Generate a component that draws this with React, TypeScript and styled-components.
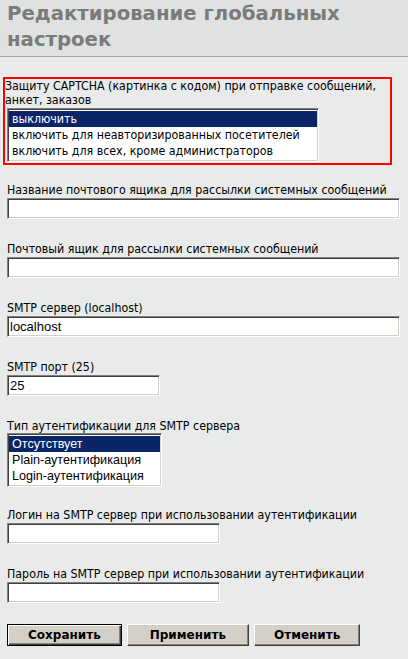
import styled, { createGlobalStyle } from "styled-components";

const GlobalStyle = createGlobalStyle`
  html, body {
    margin: 0;
    padding: 0;
    background: #e8ebe9;
  }
  body {
    font-family: "DejaVu Sans Condensed", "DejaVu Sans", Tahoma, sans-serif;
    font-size: 12.3px;
    color: #000;
  }
`;

const Page = styled.div`
  width: 408px;
  min-height: 659px;
  background: #e8ebe9;
`;

const Header = styled.div`
  background: #dfe2e0;
  border-bottom: 1px solid #a6a8a7;
  padding: 1px 7px 3px;
  height: 52px;
`;

const Title = styled.h1`
  margin: 0;
  font-family: "DejaVu Sans", Verdana, sans-serif;
  font-size: 19.7px;
  font-weight: bold;
  line-height: 26px;
  color: #7a7c7b;
`;

const Form = styled.form`
  display: flex;
  flex-direction: column;
  align-items: flex-start;
  padding: 20px 0 0 3px;
`;

const Highlight = styled.div`
  box-sizing: border-box;
  width: 389px;
  border: 2px solid #ff0000;
  padding: 0 0 1px 0;
  margin-bottom: 18px;
`;

const Field = styled.div<{ $gap?: number }>`
  display: flex;
  flex-direction: column;
  align-items: flex-start;
  padding-left: 4px;
  margin-bottom: ${(p) => p.$gap ?? 23}px;
`;

const Label = styled.label<{ $tight?: boolean }>`
  display: block;
  line-height: ${(p) => (p.$tight ? "14px" : "15px")};
  white-space: nowrap;
`;

const TextInput = styled.input<{ $width: number }>`
  box-sizing: border-box;
  width: ${(p) => p.$width}px;
  height: 21px;
  margin: 0;
  padding: 1px 2px;
  font-family: "Liberation Sans", Arial, sans-serif;
  font-size: 13px;
  color: #000;
  background: #fff;
  border-style: solid;
  border-width: 1px;
  border-color: #808080 #ffffff #ffffff #808080;
  box-shadow: inset 1px 1px 0 #404040, inset -1px -1px 0 #d4d0c8;
  outline: none;
`;

const ListBox = styled.div<{ $width: number; $shift?: number }>`
  box-sizing: border-box;
  width: ${(p) => p.$width}px;
  margin-left: ${(p) => p.$shift ?? 0}px;
  margin-top: ${(p) => (p.$shift ? 1 : -1)}px;
  background: #fff;
  border-style: solid;
  border-width: 1px;
  border-color: #808080 #ffffff #ffffff #808080;
  box-shadow: inset 1px 1px 0 #404040, inset -1px -1px 0 #d4d0c8;
  padding: 2px 1px;
`;

const Option = styled.div<{ $selected?: boolean; $arial?: boolean }>`
  height: 16px;
  line-height: 16px;
  padding-left: 3px;
  white-space: nowrap;
  font-family: ${(p) =>
    p.$arial
      ? `"Liberation Sans", Arial, sans-serif`
      : `"DejaVu Sans Condensed", "DejaVu Sans", Tahoma, sans-serif`};
  font-size: ${(p) => (p.$arial ? "12.6px" : "12.3px")};
  background: ${(p) => (p.$selected ? "#0a246a" : "transparent")};
  color: ${(p) => (p.$selected ? "#fff" : "#000")};
`;

const Buttons = styled.div`
  display: flex;
  gap: 5px;
  padding-left: 4px;
  margin-top: -2px;
`;

const Button = styled.button<{ $default?: boolean; $pad?: number }>`
  box-sizing: border-box;
  height: 22px;
  padding: 0 ${(p) => p.$pad ?? 19}px;
  margin: 0;
  font-family: "DejaVu Sans", Verdana, sans-serif;
  font-size: 12px;
  font-weight: bold;
  color: #000;
  background: #d4d0c8;
  border-style: solid;
  border-width: 1px;
  border-color: ${(p) =>
    p.$default ? "#000" : "#ffffff #404040 #404040 #ffffff"};
  box-shadow: ${(p) =>
    p.$default
      ? "inset 1px 1px 0 #fff, inset -1px -1px 0 #404040, inset -2px -2px 0 #808080"
      : "inset -1px -1px 0 #808080, inset 1px 1px 0 #d4d0c8"};
  cursor: pointer;
`;

const captchaOptions = [
  "выключить",
  "включить для неавторизированных посетителей",
  "включить для всех, кроме администраторов",
];

const authOptions = ["Отсутствует", "Plain-аутентификация", "Login-аутентификация"];

export default function App() {
  return (
    <Page>
      <GlobalStyle />
      <Header>
        <Title>
          Редактирование глобальных
          <br />
          настроек
        </Title>
      </Header>
      <Form onSubmit={(e) => e.preventDefault()}>
        <Highlight>
          <Label $tight>
            Защиту CAPTCHA (картинка с кодом) при отправке сообщений,
            <br />
            анкет, заказов
          </Label>
          <ListBox $width={312} $shift={2}>
            {captchaOptions.map((o, i) => (
              <Option key={o} $selected={i === 0}>
                {o}
              </Option>
            ))}
          </ListBox>
        </Highlight>

        <Field>
          <Label>Название почтового ящика для рассылки системных сообщений</Label>
          <TextInput $width={393} defaultValue="" />
        </Field>

        <Field>
          <Label>Почтовый ящик для рассылки системных сообщений</Label>
          <TextInput $width={393} defaultValue="" />
        </Field>

        <Field>
          <Label>SMTP сервер (localhost)</Label>
          <TextInput $width={393} defaultValue="localhost" />
        </Field>

        <Field>
          <Label>SMTP порт (25)</Label>
          <TextInput $width={153} defaultValue="25" />
        </Field>

        <Field $gap={21}>
          <Label>Тип аутентификации для SMTP сервера</Label>
          <ListBox $width={155}>
            {authOptions.map((o, i) => (
              <Option key={o} $selected={i === 0} $arial>
                {o}
              </Option>
            ))}
          </ListBox>
        </Field>

        <Field>
          <Label>Логин на SMTP сервер при использовании аутентификации</Label>
          <TextInput $width={213} defaultValue="" />
        </Field>

        <Field>
          <Label>Пароль на SMTP сервер при использовании аутентификации</Label>
          <TextInput $width={213} type="password" defaultValue="" />
        </Field>

        <Buttons>
          <Button type="submit" $default $pad={20}>
            Сохранить
          </Button>
          <Button type="button" $pad={22}>
            Применить
          </Button>
          <Button type="button" $pad={19}>
            Отменить
          </Button>
        </Buttons>
      </Form>
    </Page>
  );
}
